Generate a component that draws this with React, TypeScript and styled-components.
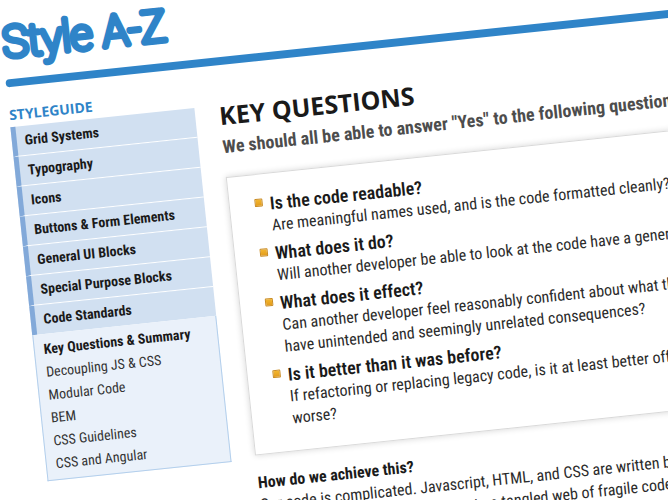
import React from "react";
import styled, { createGlobalStyle } from "styled-components";

const GlobalStyle = createGlobalStyle`
  * { box-sizing: border-box; }
  body {
    margin: 0;
    overflow: hidden;
    background: #fff;
    color: #1a1a1a;
    font-family: "Roboto Condensed", Roboto, sans-serif;
    font-size: 16px;
    line-height: 23px;
  }
  h1, h2, h3, p, ul { margin: 0; padding: 0; }
  ul { list-style: none; }
  a { color: inherit; text-decoration: none; }
`;

const Viewport = styled.div`
  height: 100vh;
  overflow: hidden;
`;

const Page = styled.div`
  width: 140%;
  margin-left: -3px;
  transform: rotate(-6deg);
  transform-origin: 0 0;
`;

const Header = styled.header`
  height: 88px;
  display: flex;
  flex-direction: column;
  justify-content: flex-end;
`;

const Logo = styled.svg`
  display: block;
  width: 200px;
  height: 60px;
  overflow: visible;
  margin-bottom: 20px;

  text {
    font-family: Roboto, sans-serif;
    font-size: 43px;
    font-weight: 100;
    fill: #2f84c8;
    stroke: #2f84c8;
    stroke-width: 6px;
    stroke-linejoin: round;
    stroke-linecap: round;
  }
`;

const Rule = styled.div`
  flex: none;
  height: 8px;
  border-radius: 4px;
  background: #2f84c8;
`;

const Columns = styled.div`
  display: flex;
  align-items: flex-start;
  gap: 24px;
`;

const Sidebar = styled.nav`
  flex: none;
  width: 185px;
  padding-top: 16px;
`;

const SidebarTitle = styled.h2`
  font-family: "Open Sans", sans-serif;
  font-size: 14px;
  line-height: 24px;
  font-weight: 700;
  color: #2f84c8;
`;

const SectionLink = styled.a<{ $last?: boolean }>`
  display: block;
  padding-left: 8px;
  border-left: 5px solid #82a9d9;
  border-bottom: ${(p) => (p.$last ? "0" : "1px solid #fff")};
  background: #d1e0f1;
  font-size: 14px;
  line-height: 29px;
  font-weight: 700;
`;

const SubList = styled.ul`
  padding: 4px 0;
  border: 1px solid #b3cfec;
  border-top: 0;
  background: #eaf1fa;
`;

const SubLink = styled.a<{ $current?: boolean }>`
  display: block;
  padding-left: 9px;
  font-size: 14px;
  color: ${(p) => (p.$current ? "#1a1a1a" : "#333")};
  font-weight: ${(p) => (p.$current ? 700 : 400)};
`;

const Main = styled.main`
  flex: 1;
  min-width: 0;
  padding-top: 32px;
  white-space: nowrap;
`;

const Title = styled.h1`
  font-family: "Open Sans", sans-serif;
  font-size: 25px;
  line-height: 36px;
  font-weight: 700;
`;

const Subtitle = styled.h2`
  font-size: 18px;
  line-height: 28px;
  font-weight: 700;
  color: #4d4d4d;
`;

const Card = styled.section`
  margin: 16px 0;
  padding: 18px 25px 16px;
  border: 1px solid #d9d9d9;
  box-shadow: 0 0 6px rgba(0, 0, 0, 0.16);
  background: #fff;
`;

const Question = styled.li`
  display: flex;
  gap: 7px;
  padding-bottom: 5px;
`;

const Bullet = styled.span`
  flex: none;
  width: 8px;
  height: 8px;
  margin-top: 6px;
  border: 1px solid #c98a1f;
  border-radius: 1px;
  background: linear-gradient(#f3b62e, #e39c1c);
`;

const QuestionTitle = styled.h3`
  font-size: 18px;
  line-height: 23px;
  font-weight: 600;
`;

const Text = styled.p`
  line-height: 22px;
  color: #2b2b2b;
`;

const AnswerTitle = styled.h3`
  font-size: 16px;
  line-height: 23px;
  font-weight: 700;
`;

const sections = [
  "Grid Systems",
  "Typography",
  "Icons",
  "Buttons & Form Elements",
  "General UI Blocks",
  "Special Purpose Blocks",
  "Code Standards",
];

const topics = [
  "Key Questions & Summary",
  "Decoupling JS & CSS",
  "Modular Code",
  "BEM",
  "CSS Guidelines",
  "CSS and Angular",
];

const questions = [
  {
    title: "Is the code readable?",
    lines: ["Are meaningful names used, and is the code formatted cleanly?"],
  },
  {
    title: "What does it do?",
    lines: ["Will another developer be able to look at the code have a general"],
  },
  {
    title: "What does it effect?",
    lines: [
      "Can another developer feel reasonably confident about what the",
      "have unintended and seemingly unrelated consequences?",
    ],
  },
  {
    title: "Is it better than it was before?",
    lines: [
      "If refactoring or replacing legacy code, is it at least better off",
      "worse?",
    ],
  },
];

function Lines({ lines }: { lines: string[] }) {
  return (
    <Text>
      {lines.map((line, i) => (
        <React.Fragment key={line}>
          {i > 0 && <br />}
          {line}
        </React.Fragment>
      ))}
    </Text>
  );
}

export default function App() {
  return (
    <Viewport>
      <GlobalStyle />
      <Page>
        <Header>
          <Logo role="img" aria-label="Style A-Z">
            <text x="1" y="58">
              Style A-Z
            </text>
          </Logo>
          <Rule />
        </Header>
        <Columns>
          <Sidebar aria-label="Styleguide">
            <SidebarTitle>STYLEGUIDE</SidebarTitle>
            <ul>
              {sections.map((name, i) => (
                <li key={name}>
                  <SectionLink href="#" $last={i === sections.length - 1}>
                    {name}
                  </SectionLink>
                </li>
              ))}
            </ul>
            <SubList>
              {topics.map((name, i) => (
                <li key={name}>
                  <SubLink href="#" $current={i === 0}>
                    {name}
                  </SubLink>
                </li>
              ))}
            </SubList>
          </Sidebar>
          <Main>
            <Title>KEY QUESTIONS</Title>
            <Subtitle>We should all be able to answer "Yes" to the following questions:</Subtitle>
            <Card>
              <ul>
                {questions.map((q) => (
                  <Question key={q.title}>
                    <Bullet />
                    <div>
                      <QuestionTitle>{q.title}</QuestionTitle>
                      <Lines lines={q.lines} />
                    </div>
                  </Question>
                ))}
              </ul>
            </Card>
            <AnswerTitle>How do we achieve this?</AnswerTitle>
            <Lines
              lines={[
                "Our code is complicated. Javascript, HTML, and CSS are written by",
                "or without due care it can decline to a tangled web of fragile code",
              ]}
            />
          </Main>
        </Columns>
      </Page>
    </Viewport>
  );
}
